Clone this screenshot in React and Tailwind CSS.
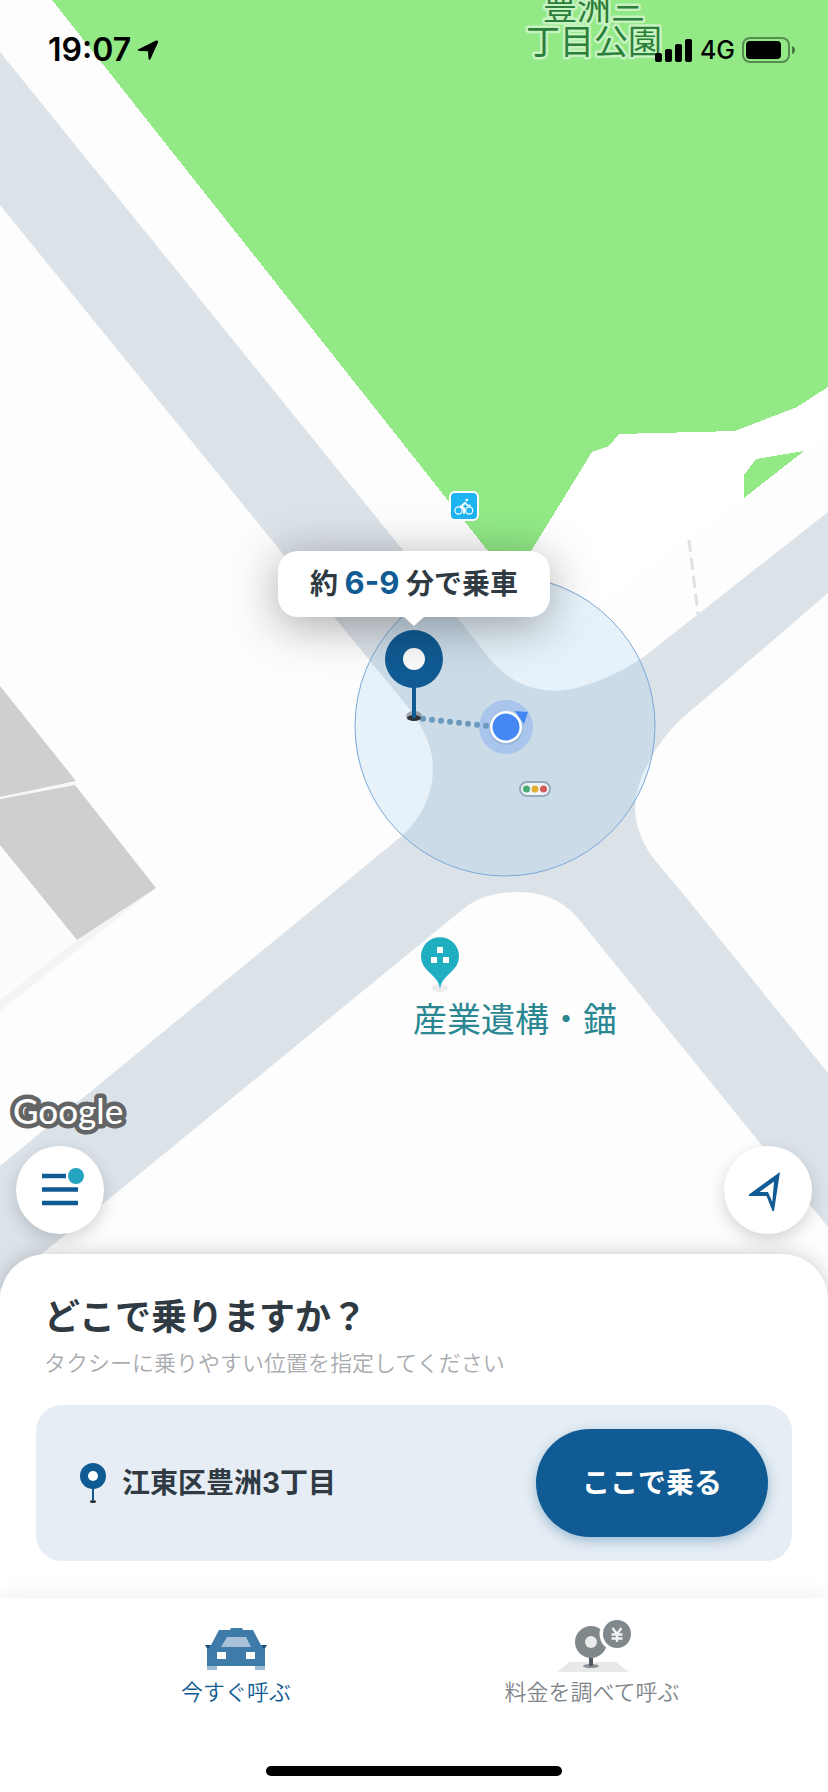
import React from "react";

const dots = [0, 1, 2, 3, 4, 5, 6, 7];

function MapCanvas() {
  return (
    <svg
      className="absolute inset-0 size-full font-['Noto_Sans_CJK_JP',sans-serif]"
      viewBox="0 0 828 1792"
      preserveAspectRatio="xMidYMin slice"
      role="img"
      aria-label="地図"
    >
      <rect width="828" height="1792" fill="#fdfdfd" />
      <path d="M512 582L592 452L619 434L735 431L797 407L828 387V438L593 610L540 640Z" fill="#fff" />

      {/* park */}
      <g fill="#92e986" shapeRendering="crispEdges">
        <path d="M52 0H828V387L797 407L735 431L619 434L609 446L592 452L512 582L488 551Z" />
        <path d="M744 475L756 459L804 451L744 498Z" />
      </g>

      {/* roads */}
      <path
        d="M0 52L457 617L490 659Q507 679 527 686Q553 695 580 687Q613 678 645 656L828 512V593L680 720Q660 740 650 760Q635 785 635 810Q637 836 653 858L680 890L828 1073V1227L577 917Q555 892 518 892Q484 892 463 909L43 1253L0 1290V1166L403 835Q433 806 433 768Q433 742 412 712L335 618L0 205Z"
        fill="#dbe2e8"
      />
      <path d="M689 540L698 614" stroke="#dde0e4" strokeWidth="3" strokeDasharray="12 6" fill="none" />

      {/* buildings */}
      <path d="M156 888L77 940L0 1000V1011Z" fill="#f5f3f3" />
      <path d="M0 845L77 940L0 1000Z" fill="#fdfbfc" />
      <path d="M0 686L76 781L0 797Z" fill="#d0cecf" />
      <path d="M0 799L75 785L156 888L77 940L0 845Z" fill="#d0cecf" />
      <path d="M0 798L76 783" stroke="#f7f5f5" strokeWidth="2" />

      {/* place labels */}
      <g
        fontSize="34"
        fill="#2c7f3a"
        stroke="#c6f3c0"
        strokeWidth="5"
        strokeLinejoin="round"
        paintOrder="stroke"
        textAnchor="middle"
      >
        <text x="594" y="20">豊洲三</text>
        <text x="594" y="54">丁目公園</text>
      </g>
      <text x="515" y="1032" fontSize="34" fill="#2a8792" textAnchor="middle">
        産業遺構・錨
      </text>
      <ellipse cx="440" cy="988" rx="8" ry="4" fill="#ececec" />
      <path d="M440 989Q439 982 434 977L426 969A19 19 0 1 1 454 969L446 977Q441 982 440 989Z" fill="#1fafc0" />
      <path d="M437 947h6v6h-6zM431 957h6v6h-6zM443 957h6v6h-6z" fill="#fff" />

      {/* bicycle parking */}
      <rect x="450" y="492" width="28" height="28" rx="5" fill="#1db4f2" stroke="#fff" strokeWidth="2" />
      <g fill="none" stroke="#fff" strokeLinecap="round" strokeLinejoin="round">
        <circle cx="458.500" cy="510.500" r="3.600" strokeWidth="1.200" />
        <circle cx="469.200" cy="510.500" r="3.600" strokeWidth="1.200" />
        <path d="M465 503L461 506.500L464 508.500V513" strokeWidth="2.200" />
        <path d="M465.500 503L467.500 505.500H470" strokeWidth="1.400" />
        <circle cx="466.700" cy="500" r="0.900" fill="#fff" />
      </g>

      {/* accuracy circle */}
      <circle cx="505" cy="726" r="150" fill="#8ac4ed" fillOpacity="0.2" stroke="#7ba8d8" />

      {/* traffic light */}
      <rect x="520" y="782" width="30" height="14" rx="7" fill="#eef4f8" stroke="#9aaabb" strokeWidth="2" />
      <circle cx="526.500" cy="789" r="3.500" fill="#4aab73" />
      <circle cx="535" cy="789" r="3.500" fill="#e0ae33" />
      <circle cx="543.500" cy="789" r="3.500" fill="#d45b5b" />

      {/* current location and walking route */}
      <circle cx="506" cy="727" r="27" fill="#a9c5eb" />
      <ellipse cx="414" cy="716" rx="8" ry="5" fill="#555" fillOpacity="0.45" />
      {dots.map((i) => (
        <circle key={i} cx={423 + i * 9} cy={718.7 + i} r="3" fill="#6c9abd" />
      ))}
      <path d="M515 711L528 712L524 724Z" fill="#4285f4" />
      <circle cx="506" cy="728" r="17" fill="#8aa5c4" fillOpacity="0.5" />
      <circle cx="506" cy="727" r="16" fill="#fff" />
      <circle cx="506" cy="727" r="13.500" fill="#4487f5" />
    </svg>
  );
}

function PickupPin() {
  return (
    <svg className="mt-[11px]" width="60" height="96" viewBox="384 628 60 96" aria-hidden="true">
      <ellipse cx="414" cy="718" rx="7" ry="3" fill="#2f3336" />
      <path d="M414 660V718" stroke="#105b93" strokeWidth="4" />
      <circle cx="414" cy="659" r="29" fill="#105b93" />
      <circle cx="414" cy="659" r="11" fill="#fafafa" />
    </svg>
  );
}

function StatusBar() {
  return (
    <header className="relative flex items-center justify-between pt-[30px] pr-8 pl-12 font-['Inter',sans-serif] text-black">
      <div className="flex items-center gap-1.5">
        <time className="text-[32px] leading-10 font-semibold">19:07</time>
        <svg width="22" height="22" viewBox="0 0 22 22" aria-hidden="true">
          <path
            d="M1 10.500L19 1.500Q21.500 1 21 3.500L13.500 20Q12 22 11.500 19.500L11 12.300L2.500 12Q-0.500 11.500 1 10.500Z"
            fill="#000"
          />
        </svg>
      </div>
      <div className="flex items-center gap-[7px]">
        <svg width="38" height="24" viewBox="0 0 38 24" aria-hidden="true">
          <rect x="0" y="15" width="7" height="9" rx="2" />
          <rect x="10" y="11" width="7" height="13" rx="2" />
          <rect x="20" y="6" width="7" height="18" rx="2" />
          <rect x="30" y="1" width="7" height="23" rx="2" />
        </svg>
        <span className="text-[25px] leading-10 font-medium">4G</span>
        <svg width="54" height="26" viewBox="0 0 54 26" aria-hidden="true">
          <rect x="1" y="1" width="46" height="24" rx="7" fill="none" stroke="#000" strokeOpacity="0.4" strokeWidth="2" />
          <rect x="4" y="4" width="35" height="18" rx="4" />
          <path d="M50 9Q53 10 53 13T50 17Z" fillOpacity="0.5" />
        </svg>
      </div>
    </header>
  );
}

function CarIcon() {
  return (
    <svg width="72" height="52" viewBox="200 1620 72 52" aria-hidden="true">
      <path d="M205 1645H211L209 1652ZM267 1645H261L263 1652Z" fill="#1d527f" />
      <path d="M207 1665H217V1670H207ZM255 1665H265V1670H255Z" fill="#9dbbd4" />
      <path d="M219 1630H230L231 1628H242L243 1630H253L262 1647L265 1649V1666H207V1649L210 1647Z" fill="#3f7ba9" />
      <path d="M227 1637H246L251 1647H221Z" fill="#a8c1d8" />
      <path d="M217 1652H226V1659H217ZM246 1652H255V1659H246Z" fill="#fff" />
    </svg>
  );
}

function FareIcon() {
  return (
    <svg width="80" height="52" viewBox="552 1620 80 52" aria-hidden="true">
      <path d="M569 1662H616L629 1672H557Z" fill="#e8eaea" />
      <ellipse cx="591" cy="1666" rx="8" ry="2" fill="#8b9195" />
      <path d="M591 1656V1666" stroke="#4f575c" strokeWidth="4" />
      <circle cx="591" cy="1642" r="16" fill="#81888c" />
      <circle cx="591" cy="1642" r="6" fill="#e9ebea" />
      <circle cx="617" cy="1634" r="17.500" fill="#fff" />
      <circle cx="617" cy="1634" r="14" fill="#81888c" />
      <path
        d="M612.500 1628L617 1634L621.500 1628M617 1634V1642M611.500 1634.500H622.500M611.500 1638.500H622.500"
        stroke="#f0f1f1"
        strokeWidth="2.300"
        fill="none"
      />
    </svg>
  );
}

export default function App() {
  return (
    <div className="relative flex min-h-screen flex-col overflow-hidden bg-[#fdfdfd] font-['Inter','Noto_Sans_CJK_JP',sans-serif]">
      <MapCanvas />

      <main className="relative flex min-h-[900px] flex-1 flex-col justify-between">
        <StatusBar />

        <div className="absolute top-[551px] left-1/2 flex -translate-x-1/2 flex-col items-center">
          <div className="relative flex h-[66px] items-center rounded-[20px] bg-white px-8 text-[28px] font-bold whitespace-pre text-[#2f3a43] shadow-[0_8px_48px_rgba(0,0,0,0.35)]">
            <p>
              約 <span className="text-[31px] leading-none text-[#105b93]">6-9</span> 分で乗車
            </p>
            <svg className="absolute top-full left-1/2 -translate-x-1/2" width="20" height="9" viewBox="0 0 20 9" aria-hidden="true">
              <path d="M0 0H20L10 9Z" fill="#fff" />
            </svg>
          </div>
          <PickupPin />
        </div>

        <div className="flex flex-col gap-2.5 px-4 pb-5">
          <svg className="-ml-2 font-['Lato',sans-serif]" width="136" height="48" viewBox="0 0 136 48" role="img" aria-label="Google">
            <text
              x="5"
              y="36"
              fontSize="35"
              fontWeight="500"
              fill="#fff"
              stroke="#636465"
              strokeWidth="9"
              strokeLinejoin="round"
              paintOrder="stroke"
            >
              Google
            </text>
          </svg>
          <div className="flex justify-between">
            <button
              type="button"
              aria-label="メニュー"
              className="flex size-[88px] items-center justify-center rounded-full bg-white shadow-[0_6px_16px_rgba(40,50,60,0.2)]"
            >
              <svg width="48" height="48" viewBox="36 1166 48 48" aria-hidden="true">
                <path d="M42 1176H66M42 1189.500H78M42 1203H78" stroke="#105b93" strokeWidth="4.500" />
                <circle cx="76" cy="1176" r="8" fill="#25a4c0" />
              </svg>
            </button>
            <button
              type="button"
              aria-label="現在地"
              className="flex size-[88px] items-center justify-center rounded-full bg-white shadow-[0_6px_16px_rgba(40,50,60,0.2)]"
            >
              <svg width="48" height="48" viewBox="744 1166 48 48" aria-hidden="true">
                <path
                  d="M780 1172L749 1194.500V1196H766.500L772.500 1211H774ZM774 1181.500L772.300 1202L768 1192H759.500Z"
                  fill="#105b93"
                  fillRule="evenodd"
                />
              </svg>
            </button>
          </div>
        </div>
      </main>

      <section className="relative rounded-t-[46px] bg-white px-9 pt-[41px] pb-[37px] shadow-[0_0_20px_rgba(0,0,0,0.2)]">
        <div className="px-2">
          <h1 className="text-[36px] leading-[44px] font-bold text-[#2f3a43]">どこで乗りますか？</h1>
          <p className="mt-2.5 text-[22px] leading-7 font-[350] text-[#a9acaf]">
            タクシーに乗りやすい位置を指定してください
          </p>
        </div>
        <div className="mt-7 flex items-center justify-between rounded-[26px] bg-[#e6edf4] p-6">
          <div className="flex items-center gap-4 pl-5">
            <svg width="26" height="42" viewBox="80 1462 26 42" aria-hidden="true">
              <ellipse cx="93" cy="1501.500" rx="3" ry="1.500" fill="#2f3336" />
              <path d="M93 1476V1501" stroke="#105b93" strokeWidth="2" />
              <circle cx="93" cy="1476" r="13" fill="#105b93" />
              <circle cx="93" cy="1476" r="5" fill="#fff" />
            </svg>
            <span className="text-[28px] font-bold text-[#2f3a43]">江東区豊洲3丁目</span>
          </div>
          <button
            type="button"
            className="h-[108px] w-[232px] rounded-full bg-[#105b93] text-[28px] font-bold text-white shadow-[0_4px_12px_rgba(16,91,147,0.35)]"
          >
            ここで乗る
          </button>
        </div>
      </section>

      <footer className="relative bg-white px-[58px] pt-[22px] shadow-[0_-2px_20px_rgba(40,50,80,0.08)]">
        <nav className="flex">
          <a href="#now" aria-current="page" className="flex flex-1 flex-col items-center gap-1 text-[22px] leading-8 font-[350] text-[#105b93]">
            <CarIcon />
            今すぐ呼ぶ
          </a>
          <a href="#fare" className="flex flex-1 flex-col items-center gap-1 text-[22px] leading-8 font-[350] text-[#7f868b]">
            <FareIcon />
            料金を調べて呼ぶ
          </a>
        </nav>
        <div className="mx-auto mt-[58px] mb-4 h-2.5 w-[296px] rounded-full bg-black" />
      </footer>
    </div>
  );
}
